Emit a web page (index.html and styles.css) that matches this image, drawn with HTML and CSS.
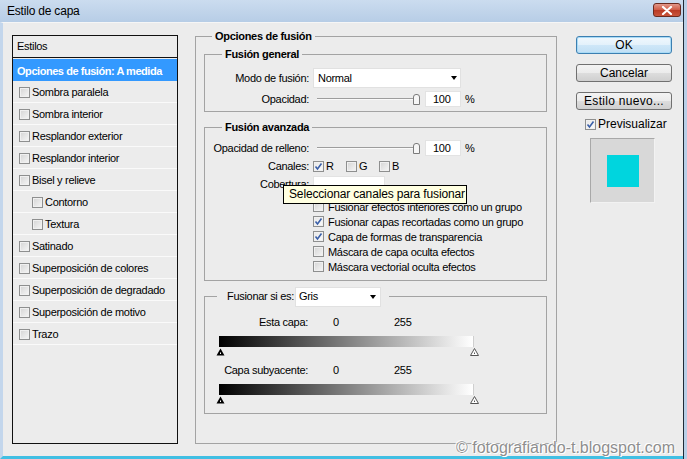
FILE: index.html
```html
<!DOCTYPE html>
<html lang="es">
<head>
<meta charset="utf-8">
<title>Estilo de capa</title>
<link rel="stylesheet" href="styles.css">
</head>
<body>
<div class="app">
  <div class="titlebar">
    <span class="title">Estilo de capa</span>
    <span class="close"><svg width="14" height="9" viewBox="0 0 14 9"><path d="M3 1 L11 8 M11 1 L3 8" stroke="#fff" stroke-width="2.2" stroke-linecap="round"/></svg></span>
  </div>
  <div class="main">
    <div class="styles-panel">
      <div class="sp-head">Estilos</div>
      <ul class="sp-list">
        <li class="sel">Opciones de fusión: A medida</li>
        <li><span class="cb"></span>Sombra paralela</li>
        <li><span class="cb"></span>Sombra interior</li>
        <li><span class="cb"></span>Resplandor exterior</li>
        <li><span class="cb"></span>Resplandor interior</li>
        <li><span class="cb"></span>Bisel y relieve</li>
        <li class="sub"><span class="cb"></span>Contorno</li>
        <li class="sub"><span class="cb"></span>Textura</li>
        <li><span class="cb"></span>Satinado</li>
        <li><span class="cb"></span>Superposición de colores</li>
        <li><span class="cb"></span>Superposición de degradado</li>
        <li><span class="cb"></span>Superposición de motivo</li>
        <li><span class="cb"></span>Trazo</li>
      </ul>
    </div>

    <fieldset class="fs outer">
      <legend>Opciones de fusión</legend>

      <fieldset class="fs inner general">
        <legend>Fusión general</legend>
        <div class="row r-mode">
          <span class="lbl">Modo de fusión:</span>
          <div class="select wide"><span>Normal</span><i class="arrow"></i></div>
        </div>
        <div class="row r-op">
          <span class="lbl">Opacidad:</span>
          <div class="slider"><span class="track"></span><svg class="thumb" width="9" height="12" viewBox="0 0 9 12"><path d="M1.5 4 Q1.5 1.5 4 1.5 H5 Q7.5 1.5 7.5 4 V11.5 H1.5 Z" fill="#f6f6f6" stroke="#7b7b7b"/></svg></div>
          <div class="num">100</div>
          <span class="pct">%</span>
        </div>
      </fieldset>

      <fieldset class="fs inner advanced">
        <legend>Fusión avanzada</legend>
        <div class="row r-fill">
          <span class="lbl">Opacidad de relleno:</span>
          <div class="slider"><span class="track"></span><svg class="thumb" width="9" height="12" viewBox="0 0 9 12"><path d="M1.5 4 Q1.5 1.5 4 1.5 H5 Q7.5 1.5 7.5 4 V11.5 H1.5 Z" fill="#f6f6f6" stroke="#7b7b7b"/></svg></div>
          <div class="num">100</div>
          <span class="pct">%</span>
        </div>
        <div class="row r-chan">
          <span class="lbl">Canales:</span>
          <span class="ch"><span class="cb on"><svg width="9" height="9" viewBox="0 0 9 9"><path d="M1.5 4.5 L3.5 7 L7.5 1.5" fill="none" stroke="#3a5fa8" stroke-width="1.6"/></svg></span>R</span>
          <span class="ch"><span class="cb"></span>G</span>
          <span class="ch"><span class="cb"></span>B</span>
        </div>
        <div class="row r-cov">
          <span class="lbl">Cobertura:</span>
          <div class="field"></div>
        </div>
        <div class="opts">
          <div class="opt"><span class="cb"></span>Fusionar efectos interiores como un grupo</div>
          <div class="opt"><span class="cb on"><svg width="9" height="9" viewBox="0 0 9 9"><path d="M1.5 4.5 L3.5 7 L7.5 1.5" fill="none" stroke="#3a5fa8" stroke-width="1.6"/></svg></span>Fusionar capas recortadas como un grupo</div>
          <div class="opt"><span class="cb on"><svg width="9" height="9" viewBox="0 0 9 9"><path d="M1.5 4.5 L3.5 7 L7.5 1.5" fill="none" stroke="#3a5fa8" stroke-width="1.6"/></svg></span>Capa de formas de transparencia</div>
          <div class="opt"><span class="cb"></span>Máscara de capa oculta efectos</div>
          <div class="opt"><span class="cb"></span>Máscara vectorial oculta efectos</div>
        </div>
      </fieldset>

      <fieldset class="fs inner blendif">
        <legend><span class="bi-lbl">Fusionar si es:</span><span class="select gray"><span>Gris</span><i class="arrow"></i></span></legend>
        <div class="lvl"><span class="lvl-lbl">Esta capa:</span><span class="v0">0</span><span>255</span></div>
        <div class="bar"></div>
        <div class="tris">
          <svg width="9" height="8" viewBox="0 0 9 8"><path d="M4.5 0.5 L8.5 7.5 H0.5 Z" fill="#000"/><rect x="4" y="4.5" width="1" height="1.5" fill="#fff"/></svg>
          <svg width="9" height="8" viewBox="0 0 9 8"><path d="M4.5 0.5 L8.5 7.5 H0.5 Z" fill="#fff" stroke="#555"/><rect x="4" y="4.5" width="1" height="1.5" fill="#555"/></svg>
        </div>
        <div class="lvl"><span class="lvl-lbl">Capa subyacente:</span><span class="v0">0</span><span>255</span></div>
        <div class="bar"></div>
        <div class="tris">
          <svg width="9" height="8" viewBox="0 0 9 8"><path d="M4.5 0.5 L8.5 7.5 H0.5 Z" fill="#000"/><rect x="4" y="4.5" width="1" height="1.5" fill="#fff"/></svg>
          <svg width="9" height="8" viewBox="0 0 9 8"><path d="M4.5 0.5 L8.5 7.5 H0.5 Z" fill="#fff" stroke="#555"/><rect x="4" y="4.5" width="1" height="1.5" fill="#555"/></svg>
        </div>
      </fieldset>
    </fieldset>

    <div class="side">
      <div class="btn def">OK</div>
      <div class="btn">Cancelar</div>
      <div class="btn last">Estilo nuevo...</div>
      <div class="prev"><span class="cb on"><svg width="9" height="9" viewBox="0 0 9 9"><path d="M1.5 4.5 L3.5 7 L7.5 1.5" fill="none" stroke="#3a5fa8" stroke-width="1.6"/></svg></span>Previsualizar</div>
      <div class="preview"><span class="swatch"></span></div>
    </div>
  </div>

  <div class="tooltip">Seleccionar canales para fusionar</div>
  <div class="watermark">© fotografiando-t.blogspot.com</div>
</div>
</body>
</html>
```
FILE: styles.css
```css
* { box-sizing: border-box; }
body {
  margin: 0;
  background: #b9cfe7;
  font-family: "Liberation Sans", Arial, sans-serif;
  font-size: 11px;
  letter-spacing: -0.3px;
  color: #000;
}
.app {
  position: relative;
  width: 684px;
  height: 459px;
  border-right: 1px solid #1f2a36;
  display: flex;
  flex-direction: column;
}
.titlebar {
  height: 22px;
  flex: none;
  display: flex;
  justify-content: space-between;
  align-items: center;
  padding: 0 2px 0 7px;
  background: linear-gradient(#cbdcef, #b7cde6);
}
.title { font-size: 12px; letter-spacing: -0.2px; color: #000; }
.close {
  align-self: flex-start;
  margin-top: 3px;
  width: 28px;
  height: 14px;
  border: 1px solid #6a2a1f;
  border-radius: 3px;
  background: linear-gradient(#e2988a, #cf5a44 50%, #b93a24 51%, #c9553c);
  display: flex;
  align-items: center;
  justify-content: center;
}
.main {
  flex: 1;
  display: flex;
  align-items: flex-start;
  background: #ececec;
  border-left: 3px solid #c3d6ec;
  border-bottom: 3px solid #41bfe3;
  border-top: 1px solid #f6f6f6;
  padding-left: 9px;
}
/* Left styles list */
.styles-panel {
  margin-top: 12px;
  width: 166px;
  height: 409px;
  border: 1px solid #111;
  background: #ececec;
}
.sp-head {
  height: 22px;
  line-height: 21px;
  padding-left: 4px;
  border-bottom: 1px solid #111;
}
.sp-list { list-style: none; margin: 0; padding: 1px 0 0; }
.sp-list li {
  height: 22px;
  display: flex;
  align-items: center;
  border-bottom: 1px solid #fafafa;
  padding-top: 1px;
}
.sp-list li.sel {
  background: #3399ff;
  color: #fff;
  font-weight: bold;
  padding-left: 4px;
  border-bottom: 0;
  letter-spacing: -0.45px;
}
.sp-list li .cb { margin-left: 6px; margin-right: 2px; }
.sp-list li.sub .cb { margin-left: 19px; }

.cb {
  flex: none;
  display: inline-flex;
  align-items: center;
  justify-content: center;
  width: 11px;
  height: 11px;
  border: 1px solid #8e8f8f;
  background: linear-gradient(135deg, #d4d4d4, #f6f6f6);
  box-shadow: inset 0 0 0 1px #f0f0f0;
}
.cb.on { background: linear-gradient(135deg, #e6e6e6, #fbfbfb); }

/* Fieldsets */
.fs {
  margin: 0;
  padding: 0;
  min-width: 0;
  border: 1px solid #a3a3a3;
}
.fs > legend {
  font-weight: bold;
  line-height: 13px;
  padding: 0 3px;
}
.outer {
  margin: 7px 0 0 17px;
  width: 362px;
  height: 414px;
}
.outer > legend { margin-left: 16px; }
.inner { margin: 5px 0 0 8px; width: 343px; }
.inner > legend { margin-left: 17px; }
.advanced { margin-top: 9px; }

.row { display: flex; align-items: center; height: 16px; }
.lbl { width: 104px; text-align: right; margin-right: 4px; white-space: nowrap; }
.r-mode { margin-top: 7px; height: 20px; }
.r-op { margin-top: 3px; margin-bottom: 4px; }
.r-fill { margin-top: 6px; }
.r-chan, .r-cov { margin-top: 2px; }

.select {
  height: 20px;
  background: #fff;
  border: 1px solid #e1e1e1;
  display: flex;
  align-items: center;
  justify-content: space-between;
  padding: 0 3px 0 4px;
}
.select.wide { width: 148px; }
.arrow {
  width: 0;
  height: 0;
  border-top: 4px solid #000;
  border-left: 3.5px solid transparent;
  border-right: 3.5px solid transparent;
}
.slider {
  width: 108px;
  display: flex;
  align-items: center;
  padding-left: 4px;
}
.track {
  width: 98px;
  height: 2px;
  border-top: 1px solid #9d9d9d;
  border-bottom: 1px solid #fafafa;
}
.thumb { margin-left: -3px; flex: none; }
.num {
  margin-left: 4px;
  width: 36px;
  height: 16px;
  background: #fff;
  border: 1px solid #e3e3e3;
  padding-left: 7px;
  line-height: 14px;
}
.pct { margin-left: 4px; }

.ch { display: flex; align-items: center; width: 33px; }
.ch .cb { margin-right: 2px; }
.field {
  width: 72px;
  height: 16px;
  background: #fff;
  border: 1px solid #e3e3e3;
}
.opts { margin: 7px 0 6px 108px; }
.opt { height: 15px; display: flex; align-items: center; }
.opt .cb { margin-right: 4px; }

.blendif { margin-top: 5px; }
.blendif > legend {
  font-weight: normal;
  display: flex;
  align-items: center;
  height: 21px;
  margin-left: 12px;
  padding: 0 8px 0 10px;
}
.bi-lbl { width: 68px; white-space: nowrap; }
.select.gray { width: 86px; padding-left: 3px; padding-right: 4px; }
.lvl { display: flex; height: 14px; align-items: center; margin-top: 8px; }
.lvl + .bar + .tris + .lvl { margin-top: 7px; }
.lvl-lbl { width: 103px; text-align: right; margin-right: 25px; }
.v0 { width: 61px; }
.bar {
  margin: 7px 0 0 14px;
  width: 255px;
  height: 11px;
  background: linear-gradient(to right, #000, #fff);
  border-right: 1px solid #cfcfcf;
}
.tris {
  margin: 1px 0 0 11px;
  width: 263px;
  height: 8px;
  display: flex;
  justify-content: space-between;
}
.tris:last-child { margin-bottom: 9px; }

/* Right column */
.side {
  margin: 13px 0 0 19px;
  width: 96px;
  display: flex;
  flex-direction: column;
}
.btn {
  height: 18px;
  border: 1px solid #707070;
  border-radius: 3px;
  background: linear-gradient(#f3f3f3, #ebebeb 50%, #dddddd 51%, #cfcfcf);
  font-size: 12px;
  letter-spacing: 0;
  line-height: 16px;
  text-align: center;
  margin-bottom: 10px;
}
.btn.def {
  border-color: #3c7fb1;
  box-shadow: inset 0 0 0 1px #a9dbf6;
  background: linear-gradient(#f1f8fd, #e3f1fb 50%, #cfe7f8 51%, #c0dff5);
}
.btn.last { margin-bottom: 7px; letter-spacing: 0.3px; }
.prev {
  height: 14px;
  display: flex;
  align-items: center;
  margin-left: 9px;
  font-size: 12px;
  letter-spacing: 0;
}
.prev .cb { margin-right: 2px; }
.preview {
  margin: 7px 0 0 14px;
  width: 65px;
  height: 65px;
  background: #d8d8d8;
  border: 1px solid;
  border-color: #a8a8a8 #f2f2f2 #f2f2f2 #a8a8a8;
  display: flex;
  align-items: center;
  justify-content: center;
}
.swatch { width: 32px; height: 32px; background: #00d5de; }

/* Overlays */
.tooltip {
  position: absolute;
  left: 283px;
  top: 185px;
  width: 184px;
  height: 19px;
  background: #ffffe1;
  border: 1px solid #000;
  font-size: 12px;
  letter-spacing: -0.15px;
  line-height: 17px;
  padding-left: 5px;
  white-space: nowrap;
}
.watermark {
  position: absolute;
  left: 456px;
  top: 439px;
  font-size: 16px;
  letter-spacing: 0;
  color: #8e8e8e;
  text-shadow: 0 0 2px #fff, 1px 1px 0 #fff, -1px -1px 0 #fff;
  white-space: nowrap;
}
```
